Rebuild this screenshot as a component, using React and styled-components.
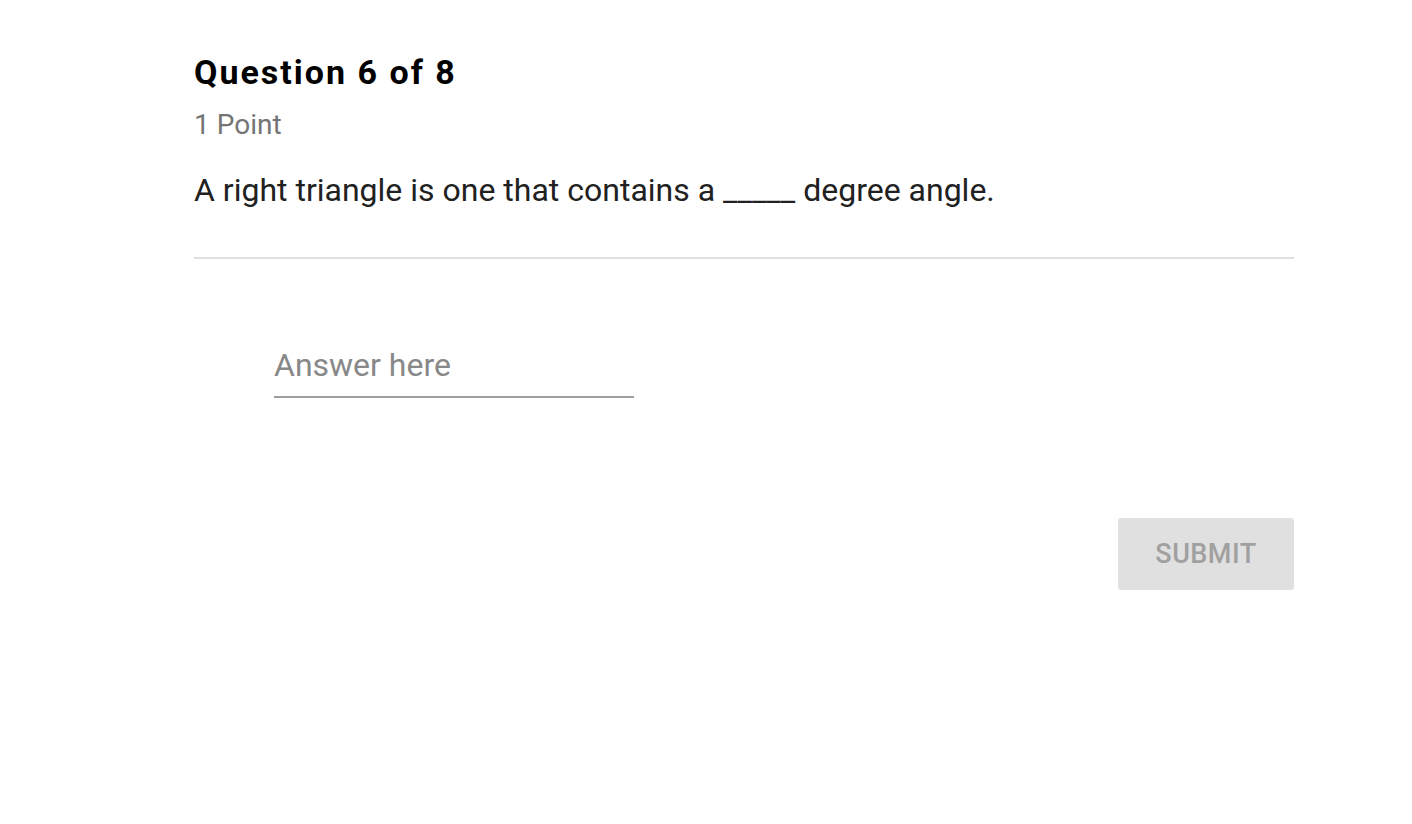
import styled, { createGlobalStyle } from 'styled-components';

const GlobalStyle = createGlobalStyle`
  body {
    margin: 0;
    background: #ffffff;
    font-family: Roboto, "Liberation Sans", sans-serif;
  }
`;

const Page = styled.main`
  width: 1100px;
  padding: 52px 0 0 194px;
`;

const Heading = styled.h1`
  margin: 0;
  font-size: 34px;
  font-weight: 700;
  letter-spacing: 2px;
  line-height: 40px;
  color: #000000;
`;

const Points = styled.div`
  margin-top: 17px;
  font-size: 28px;
  line-height: 32px;
  color: #757575;
`;

const Prompt = styled.p`
  margin: 29px 0 0;
  font-size: 32px;
  line-height: 40px;
  color: #212121;
`;

const Divider = styled.hr`
  margin: 47px 0 0;
  border: 0;
  border-top: 2px solid #e0e0e0;
`;

const AnswerRow = styled.div`
  padding: 87px 0 0 80px;
`;

const AnswerInput = styled.input`
  display: block;
  width: 360px;
  box-sizing: border-box;
  padding: 0 0 12px;
  border: 0;
  border-bottom: 2px solid #9e9e9e;
  outline: none;
  font-family: Roboto, "Liberation Sans", sans-serif;
  font-size: 32px;
  line-height: 38px;
  color: #212121;
  background: transparent;

  &::placeholder {
    color: #888888;
  }
`;

const Actions = styled.div`
  display: flex;
  justify-content: flex-end;
  margin-top: 120px;
`;

const SubmitButton = styled.button`
  width: 176px;
  height: 72px;
  border: 0;
  border-radius: 3px;
  background: #e0e0e0;
  color: #a0a0a0;
  font-family: Roboto, "Liberation Sans", sans-serif;
  font-size: 27px;
  font-weight: 500;
  letter-spacing: 0.5px;
  cursor: default;
`;

const App = () => {
  return (
    <Page>
      <GlobalStyle />
      <Heading>Question 6 of 8</Heading>
      <Points>1 Point</Points>
      <Prompt>A right triangle is one that contains a _____ degree angle.</Prompt>
      <Divider />
      <AnswerRow>
        <AnswerInput placeholder="Answer here" />
      </AnswerRow>
      <Actions>
        <SubmitButton disabled>SUBMIT</SubmitButton>
      </Actions>
    </Page>
  );
};

export default App;
